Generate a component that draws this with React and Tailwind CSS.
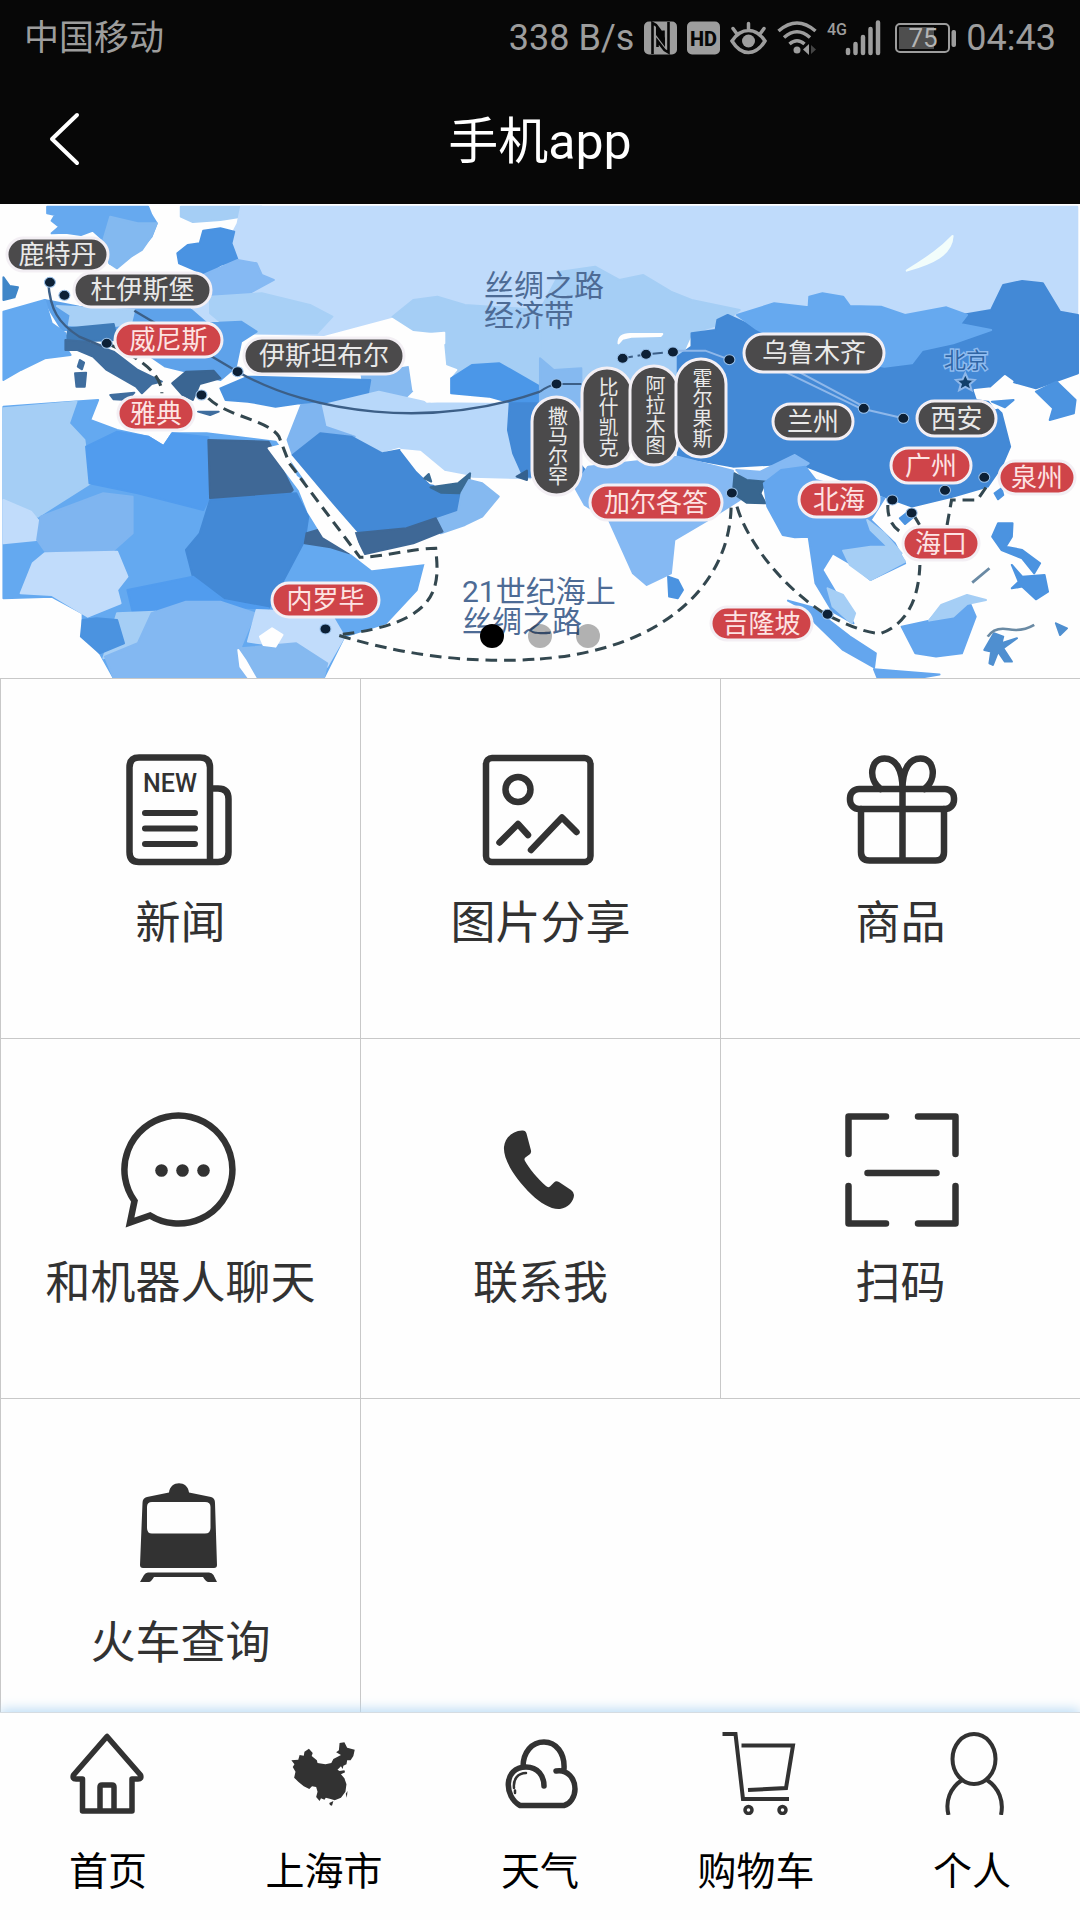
import React from "react";

const LAND_WEST = [
  ["#66a9ef", "M137 20H430L440 45 455 70 440 110 415 140 385 165 340 200 318 190 300 120 270 92 235 105 190 98 150 100 172 80 150 62 160 45 137 40Z"],
  ["#83b9f0", "M320 50L400 70 455 70 440 108 412 150 380 170 340 205 318 190 300 120Z"],
  ["#a5cef5", "M525 20H760L700 50 640 60 560 66 525 50Z"],
  ["#bfdbfb", "M700 20H1568V420L1330 470 1250 320 940 405 730 400 640 360 560 370 560 230 690 200 670 110 690 70Z"],
  ["#4a93e2", "M515 160L545 135 580 130 590 92 640 85 680 95 672 130 690 180 640 195 600 225 520 190Z"],
  ["#85b9f3", "M590 225L690 180 745 190 760 225 795 240 720 282 610 290Z"],
  ["#a8d0f6", "M610 290L760 280 900 315 965 350 920 400 730 400 640 365 610 340Z"],
  ["#5ea2ea", "M130 300L230 320 550 325 600 370 700 365 745 395 700 425 685 500 640 540 560 520 480 500 340 400 180 390 150 340Z"],
  ["#a8d0f6", "M165 318L390 330 380 372 280 385 200 375 205 345Z"],
  ["#3f7bb8", "M200 385L330 372 340 420 190 425Z"],
  ["#64a9f0", "M10 335L130 300 150 370 190 400 190 440 205 465 130 475 60 510 10 540Z"],
  ["#3f86c8", "M10 232L28 258 52 262 42 292 10 300Z"],
  ["#3f6d9e", "M190 420L250 425 330 455 400 510 470 545 440 552 412 580 395 560 310 510 270 470 225 450 190 450Z"],
  ["#3f6d9e", "M218 520L250 518 246 560 222 560ZM232 480L244 488 238 508 226 500ZM320 585L390 578 370 600 330 598ZM575 635H635L610 645Z"],
  ["#3a6592", "M500 550L540 515 620 512 640 535 580 552 560 600 530 585Z"],
  ["#a5cef5", "M1140 350L1200 300 1270 290 1350 315 1568 330V590H1440L1340 560 1300 510 1290 400 1200 390Z"],
  ["#85b9f0", "M1050 525L1190 500 1210 560 1170 600 1060 600Z"],
  ["#4b93e0", "M640 565L720 530 1075 540 1065 600 980 612 870 610 800 620 720 605 655 600Z"],
  ["#b8d8fa", "M900 625L1100 575 1250 610 1480 612 1510 800 1540 835 1370 830 1240 800 1160 740 1110 755 1000 700 930 680Z"],
  ["#7fb5f0", "M875 615L930 610 945 680 1030 710 930 700 850 765 835 720Z"],
  ["#fefefe", "M1170 440L1210 405 1290 398 1290 430 1240 440 1248 480 1325 510 1296 545 1310 600 1240 605 1200 570 1190 500Z"],
  ["#4b97e8", "M1310 535L1370 495 1450 490 1568 560V605L1490 610 1420 590 1310 580Z"],
  ["#4389d6", "M1480 610H1568V830H1520L1490 760 1475 690Z"],
  ["#35618f", "M1500 830L1530 812V840Z"],
  ["#4389d6", "M850 765L930 700 1020 710 1110 760 1160 750 1240 830 1270 875 1340 875 1330 940 1260 960 1180 985 1040 995 960 900Z"],
  ["#fefefe", "M1165 750L1220 755 1290 815 1355 828 1320 862 1250 850 1210 810Z"],
  ["#3a6b94", "M1250 862L1330 850 1365 820 1362 850 1335 880 1280 878ZM1232 835L1245 822 1252 845Z"],
  ["#85b9f0", "M1362 840L1400 850 1448 890 1400 950 1350 975 1280 1000 1260 960 1330 935 1340 880Z"],
  ["#3f6896", "M1030 1000L1180 985 1265 955 1285 995 1200 1030 1060 1062Z"],
  ["#64a9f0", "M10 620L210 605 285 600 262 660 340 690 430 710 475 738 500 700 600 700 800 725 1045 1080 1230 1090 1210 1170 1120 1270 1000 1310 940 1434H330L290 1360 240 1300 240 1240 150 1190 10 1195Z"],
  ["#a5cef5", "M10 625L222 605 200 670 245 720 262 850 110 950 10 900Z"],
  ["#519cee", "M250 740L340 695 430 710 475 738 500 700 605 712V900L590 930 400 880 260 850Z"],
  ["#3f6896", "M605 720L780 725 850 870 830 890 610 895Z"],
  ["#4389d6", "M610 900L860 880 895 950 885 1020 780 1225 650 1200 560 1130 540 1050 580 1000Z"],
  ["#c1dcfb", "M10 900L90 935 118 970 105 1020 10 1030Z"],
  ["#7fb5f0", "M118 950L300 880 385 890 385 1000 320 1060 130 1052 108 1020Z"],
  ["#c1dcfb", "M130 1060L340 1055 370 1130 340 1170 350 1210 255 1250 150 1185 60 1180 95 1090Z"],
  ["#519cee", "M370 1170L560 1130 650 1200 780 1225 560 1220 440 1240 385 1235Z"],
  ["#a5cef5", "M340 1240L450 1235 410 1340 300 1375Z"],
  ["#83b8f2", "M440 1240L540 1205 640 1205 740 1240 700 1340 735 1434H330L305 1370 400 1330Z"],
  ["#4b93e0", "M240 1260L280 1255 340 1260 360 1330 290 1360 235 1310Z"],
  ["#c1dcfb", "M745 1230L960 1240 1000 1310 950 1400 870 1345 720 1325Z"],
  ["#85b9f0", "M700 1345L860 1330 950 1390 940 1434H730Z"],
  ["#fefefe", "M755 1310L790 1285 820 1305 800 1340 765 1335ZM692 1350L712 1380 742 1434H722L698 1400Z"],
  ["#3f6896", "M890 1000L940 985 1015 1060 960 1042 885 1030Z"],
  ["#fefefe", "M780 745L820 735 860 830 940 890 960 940 1025 990 1050 1070 1240 1055 1300 1060 1230 1090 1080 1108 1020 1060 940 1010 895 935 870 870Z"],
];

const LAND_EAST = [
  ["#bfdbfb", "M0 20H1560V400H0Z"],
  ["#a5cef5", "M0 330L60 215 160 200 230 240 300 225 380 275 440 300 580 330 530 370 440 400 410 470 400 640H0Z"],
  ["#85b9f0", "M0 475L40 510 120 505V620H0Z"],
  ["#fefefe", "M228 430Q228 402 262 402H355L350 408 265 410 240 416Z"],
  ["#4389d6", "M440 400L510 390 515 360 545 345 620 380 900 480 1100 450 1220 380 1225 345 1310 330 1345 255 1400 243 1460 250 1510 335 1562 345V520L1440 565 1370 545 1290 570 1310 610 1340 640 1365 740 1340 800 1300 860 1200 890 1080 920 1000 890 900 850 750 790 560 800 400 770V470L440 440Z"],
  ["#66a9ef", "M572 345L680 310 780 322 782 290 820 280 880 290 900 318 990 320 1060 345 1180 322 1240 345 1220 372 1310 390 1200 430 1110 450 1080 490 1000 500 740 450 625 385Z"],
  ["#fefefe", "M1262 570L1310 565 1350 528 1372 545 1340 585 1380 605 1322 625 1305 600 1270 595Z"],
  ["#4b93e0", "M1312 605L1375 600 1350 622ZM1440 575L1500 545 1555 600 1550 640 1480 660 1490 625Z"],
  ["#4389d6", "M90 760L130 810 155 855 120 855Z"],
  ["#85b9f3", "M100 860L140 800 400 770 560 812 580 900 480 965 390 1020 380 1120 310 1155 270 1120 200 960 130 915Z"],
  ["#85b9f3", "M570 810L640 815 740 765 780 790 690 850 600 845Z"],
  ["#4b93e0", "M372 1130L400 1140 415 1170 400 1195 375 1190Z"],
  ["#38668f", "M565 820L600 840 655 845 640 880 655 910 600 908 560 880Z"],
  ["#64a6ee", "M650 850L700 810 770 800 800 840 1000 895 960 960 1030 1030 1060 1090 960 1140 900 1090 850 1060 820 1110 860 1180 910 1270 850 1235 800 1150 780 1010 740 1012 705 1005 660 920Z"],
  ["#a5cef5", "M880 1052L960 1040 1030 1040 1060 1085 960 1140 900 1095ZM835 1165L880 1185 915 1240 905 1270 850 1220ZM950 960L1000 1000 1050 1060 1030 1060 960 990Z"],
  ["#64a6ee", "M720 1202L790 1222 900 1310 975 1360 970 1402 880 1350 800 1270 770 1230ZM970 1408L1160 1424 1100 1434H980Z"],
  ["#64a6ee", "M1050 1280L1130 1262 1170 1215 1240 1190 1265 1250 1225 1360 1150 1370 1090 1360Z"],
  ["#a5cef5", "M1130 1262L1165 1215 1240 1185 1295 1200 1240 1212 1200 1250Z"],
  ["#4b93e0", "M1330 970L1372 970 1370 1010 1352 1040 1400 1050 1452 1090 1435 1120 1400 1075 1340 1050 1313 1010ZM1370 1095L1400 1130 1465 1125 1475 1175 1440 1198 1400 1160 1370 1165 1390 1145Z"],
  ["#4f8fd0", "M1290 1350L1318 1300 1345 1310 1340 1330 1385 1315 1345 1345 1370 1385 1350 1385 1330 1355 1315 1395 1305 1390 1310 1355ZM1498 1270L1530 1285 1510 1305Z"],
  ["#4b93e0", "M1045 955L1070 935 1085 950 1060 972ZM1320 880L1340 865 1345 885 1330 898Z"],
  ["#f2fdfb", "M1065 212C1120 175 1160 150 1198 108 1195 165 1140 190 1065 212Z"],
];

const DOTS_WEST = [[145, 247], [187, 286], [310, 430], [690, 515], [585, 585], [945, 1287]];
const DOTS_EAST = [[48, 552], [240, 475], [308, 463], [386, 456], [550, 479], [940, 625], [1055, 655], [1290, 832], [1176, 871], [1023, 900], [1079, 939], [557, 879], [835, 1243]];

// name, x, y, width, height, kind
const CITIES = [
  ["鹿特丹", 7, 34, 101, 33, "land"],
  ["杜伊斯堡", 74, 69, 137, 34, "land"],
  ["威尼斯", 115, 119, 107, 34, "sea"],
  ["伊斯坦布尔", 244, 134, 160, 36, "land"],
  ["雅典", 118, 193, 76, 33, "sea"],
  ["内罗毕", 272, 379, 107, 34, "sea"],
  ["乌鲁木齐", 744, 130, 140, 38, "land"],
  ["兰州", 773, 200, 80, 35, "land"],
  ["西安", 917, 197, 79, 35, "land"],
  ["广州", 891, 244, 80, 35, "sea"],
  ["泉州", 999, 257, 76, 33, "sea"],
  ["北海", 799, 278, 80, 35, "sea"],
  ["海口", 903, 323, 76, 33, "sea"],
  ["加尔各答", 590, 281, 132, 35, "sea"],
  ["吉隆坡", 711, 403, 101, 33, "sea"],
  ["撒马尔罕", 532, 193, 49, 98, "land"],
  ["比什凯克", 582, 164, 50, 99, "land"],
  ["阿拉木图", 630, 162, 48, 99, "land"],
  ["霍尔果斯", 676, 155, 50, 98, "land"],
];

function SilkRoadMap() {
  return (
    <svg viewBox="0 0 1080 474" className="block w-full" role="img" aria-label="丝绸之路地图">
      <rect width="1080" height="474" fill="#fefefe" />
      <g transform="matrix(.3444 0 0 .3333 0 -4)" strokeWidth="6" strokeLinejoin="round">
        {LAND_WEST.map(([fill, d]) => <path key={d} d={d} fill={fill} stroke={fill} />)}
      </g>
      <g transform="matrix(.3444 0 0 .3333 540 -4)" strokeWidth="6" strokeLinejoin="round">
        {LAND_EAST.map(([fill, d]) => <path key={d} d={d} fill={fill} stroke={fill} />)}
        <path d="M1255 1148L1305 1105M1300 1310Q1320 1280 1360 1288T1435 1275" fill="none" stroke="#6a8aa4" strokeWidth="8" />
      </g>
      <g transform="matrix(.3444 0 0 .3333 0 -4)" fill="none" stroke="#3c5f87" strokeWidth="7">
        <path d="M140 245C145 330 170 370 230 410L300 440M390 332L690 515C900 640 1250 690 1568 575" />
        <g stroke="#33474f" strokeWidth="9" strokeDasharray="34 20">
          <path d="M320 435C400 470 470 520 470 580M605 595C660 650 780 660 810 710L840 790 1045 1072C1120 1070 1200 1045 1265 1045 1275 1150 1290 1270 980 1305 1200 1375 1400 1390 1568 1377" />
        </g>
        <g fill="#0c2036" stroke="#9cc3ec" strokeWidth="3">
          {DOTS_WEST.map(([x, y]) => <ellipse key={x} cx={x} cy={y} rx="16" ry="15" />)}
        </g>
      </g>
      <g transform="matrix(.3444 0 0 .3333 540 -4)" fill="none" stroke="#8fb8ea" strokeWidth="6">
        <path d="M710 515L930 625 1055 655M750 515L940 620" />
        <path stroke="#3c5f87" d="M0 575Q25 556 48 552H120" />
        <path stroke="#3c5f87" strokeDasharray="30 14" d="M240 475L308 463 386 456" />
        <path d="M386 452H480L550 479" />
        <g stroke="#33474f" strokeWidth="9" strokeDasharray="34 20">
          <path d="M0 1377C350 1350 550 1160 555 920M572 920C600 1020 700 1160 830 1243 920 1290 960 1300 990 1300 1070 1270 1100 1190 1103 1095M1010 915C1008 960 1030 990 1055 1000M1085 945L1105 980M1182 975L1195 900 1270 900 1300 855" />
        </g>
        <g fill="#0c2036" stroke="#9cc3ec" strokeWidth="3">
          {DOTS_EAST.map(([x, y]) => <ellipse key={x} cx={x} cy={y} rx="16" ry="15" />)}
        </g>
        <path d="M1235 520L1243 538 1262 540 1248 553 1253 571 1235 561 1217 571 1222 553 1208 540 1227 538Z" fill="#12406b" />
      </g>
      <g fontSize="30" fill="#4d6b95" dominantBaseline="central">
        <text x="484" y="81">丝绸之路</text>
        <text x="484" y="111">经济带</text>
        <text x="462" y="387">21世纪海上</text>
        <text x="462" y="417">丝绸之路</text>
      </g>
      <text x="966" y="156" fontSize="22" fill="#2f65a5" stroke="#8fbcf0" strokeWidth="3" paintOrder="stroke" textAnchor="middle" dominantBaseline="central">北京</text>
      {CITIES.map(([name, x, y, w, h, kind]) => {
        const tall = h > w;
        return (
          <g key={name}>
            <rect x={x} y={y} width={w} height={h} rx={Math.min(w, h) / 2} fill={kind === "sea" ? "#cf4449" : "#4b4a4b"} stroke="#f3eff4" strokeWidth="3" />
            <text
              x={x + w / 2}
              y={y + h / 2}
              fontSize={tall ? 20 : 26}
              fill={kind === "sea" ? "#fde3e3" : "#e9e9e9"}
              textAnchor="middle"
              dominantBaseline="central"
              className={tall ? "[writing-mode:vertical-rl]" : ""}
            >
              {name}
            </text>
          </g>
        );
      })}
    </svg>
  );
}

function TileIcon({ children }) {
  return (
    <svg viewBox="0 0 120 120" className="size-[120px]" fill="none" stroke="#323232" strokeWidth="6.5" strokeLinecap="round" strokeLinejoin="round" aria-hidden="true">
      {children}
    </svg>
  );
}

const TILES = [
  { label: "新闻", icon: (
    <>
      <path d="M18 8.500H79Q89 8.500 89 18.500V113H18Q8.500 113 8.500 103V18.500Q8.500 8.500 18 8.500ZM89 39.500H97Q107.500 39.500 107.500 50V103Q107.500 113 97 113H87" strokeWidth="6.500" />
      <path d="M24 64H74M24 79.500H74M24 95H74" strokeWidth="6" />
      <text x="49" y="43" textAnchor="middle" fontSize="25" fontWeight="500" fill="#323232" stroke="none">NEW</text>
    </>
  ) },
  { label: "图片分享", icon: (
    <>
      <rect x="5" y="9" width="104.500" height="104" rx="6" />
      <circle cx="37" cy="40.500" r="12.500" />
      <path d="M18.500 93.500L37 75 47 86M50 101L81 68.500 95.500 83" />
    </>
  ) },
  { label: "商品", icon: (
    <>
      <rect x="9" y="40" width="104" height="20" rx="9" />
      <path d="M20 60V103Q20 111.500 28.500 111.500H94.500Q103 111.500 103 103V60M61.500 40V111" />
      <path d="M39.500 40C26.500 30 29.500 9.500 43.500 9.500 54.500 9.500 61.500 20 61.500 40M83.500 40C96.500 30 93.500 9.500 79.500 9.500 68.500 9.500 61.500 20 61.500 40" />
    </>
  ) },
  { label: "和机器人聊天", icon: (
    <>
      <path d="M13.500 92A54 54 0 1 1 29 106.500L9 113.500Z" strokeLinejoin="miter" strokeWidth="6.500" />
      <g fill="#323232" stroke="none"><circle cx="40.500" cy="61.500" r="6.300" /><circle cx="61.500" cy="61.500" r="6.300" /><circle cx="82.500" cy="61.500" r="6.300" /></g>
    </>
  ) },
  { label: "联系我", icon: (
    <path fill="#323232" stroke="none" d="M41 21.500C32 22 24 28 23 38 22 49 32 68 51 86 59 94 71 101 79 100 87 99 93 92 93 86Q93 83 90 81L78 73Q75 71.500 73 73.500L69 77.500Q67 79 65 77C56 69 48 59 44 52Q42.500 49.500 45 48L48.500 45.500Q50.500 44 50 41.500L45.500 24.500Q44.500 21 41 21.500Z" />
  ) },
  { label: "扫码", icon: (
    <path d="M45 7.500H7.500V45M77 7.500H114.500V45M7.500 77V114.500H45M114.500 77V114.500H77M26.500 64H95.500" />
  ) },
  { label: "火车查询", icon: (
    <g fill="#323232" stroke="none">
      <path fillRule="evenodd" d="M48 23.500C49 11 67 11 68 23.500L90 28Q94 29 94 34L96 96Q96 99 93 99H22Q19 99 19 96L21.500 34Q21.500 29 26 28ZM31 33Q26 33 26 38V59Q26 64.500 31 64.500H84Q89.500 64.500 89.500 59V38Q89.500 33 84 33Z" />
      <path d="M27 103.500H88Q91 103.500 92.500 106L96 113H87.500Q85 113 82 108H33Q30 113 28 113H19L23 106Q24.500 103.500 27 103.500Z" />
    </g>
  ) },
];

const TABS = [
  { label: "首页", icon: (
    <path strokeWidth="5.500" d="M41 5.500L7.500 44Q6 48 10 48H16.500V80H66V48H72Q76 48 74.500 44ZM34 80V56Q34 54 36 54H46Q48 54 48 56V80" strokeLinejoin="round" />
  ) },
  { label: "上海市", icon: (
    <path transform="matrix(.3444 0 0 .3333 -282 -30)" fill="#323232" stroke="none" d="M846 178L866 176 870 162 882 164 884 152 897 143 908 156 905 165 920 178 922 186 945 190 962 186 968 174 990 162 976 154 984 148 986 126 1000 124 1008 140 1030 146 1026 165 1018 178 1008 178 1006 190 997 194 995 204 990 196 980 206 986 210 1000 208 1002 214 990 220 1000 232 1006 250 1003 272 990 290 972 298 960 294 946 290 942 296 932 292 928 300 918 288 922 272 918 258 906 256 898 264 882 256 866 242 854 230 858 212 850 198 855 190ZM956 306L968 300 964 314 958 312ZM1004 278L1009 270 1007 290Z" />
  ) },
  { label: "天气", icon: (
    <>
      <path strokeWidth="5.500" d="M66 74.500H22C6 66 5 36 28 36 40 36 46 45 46 55M25 36C25 21 34 11 46 11 58 11 67 22 66 38M58 40C70 38 77 48 77 58 77 66 72 73 66 74.500" strokeLinecap="round" />
      <path strokeWidth="2.500" d="M16 57C15 48 20 42 28 42M17 59.500V62" strokeLinecap="round" />
    </>
  ) },
  { label: "购物车", icon: (
    <>
      <path strokeWidth="4" d="M8.500 3H21.500L29 68H75M27.500 14.500H79L72 57 34 59" />
      <g strokeWidth="3.500"><circle cx="34.500" cy="79" r="3.500" /><circle cx="68.500" cy="79" r="3.500" /></g>
    </>
  ) },
  { label: "个人", icon: (
    <g strokeWidth="4"><ellipse cx="44" cy="28" rx="21.500" ry="25" /><path d="M32 49C20 57 15 70 18.500 84M57 49C69 57 74 70 71 84" /></g>
  ) },
];

function StatusIcons() {
  return (
    <>
      <svg className="h-[34px] w-[33px]" viewBox="0 0 33 34" aria-hidden="true">
        <rect y=".5" width="33" height="33" rx="5" fill="#9d9d9d" />
        <path d="M8.500 33V2L12 4 19.500 14V9.500M24.500 1V31.500L20.500 29 13.500 20V26" fill="none" stroke="#070707" strokeWidth="2.600" />
        <path d="M12 5L21 17V26L12 14Z" fill="#070707" />
      </svg>
      <svg className="h-[34px] w-[33px]" viewBox="0 0 33 34" aria-label="HD">
        <rect y=".5" width="33" height="33" rx="5" fill="#9d9d9d" />
        <text x="16.500" y="24.500" textAnchor="middle" fontSize="20" fontWeight="800" fill="#070707">HD</text>
      </svg>
      <svg className="h-[34px] w-[37px]" viewBox="0 0 37 34" fill="none" stroke="#9d9d9d" strokeWidth="3.500" strokeLinecap="round" aria-hidden="true">
        <path d="M2 20Q9 9.500 18.500 9.500T35 20Q28 31.500 18.500 31.500T2 20ZM18.500 9V2.500M7 13L3 7.500M30 13L34 7.500" />
        <circle cx="18.500" cy="20" r="6.500" fill="#9d9d9d" stroke="none" />
      </svg>
      <svg className="h-[34px] w-[40px]" viewBox="0 0 40 34" fill="none" stroke="#9d9d9d" strokeWidth="3.500" aria-hidden="true">
        <path d="M1.500 10Q20-6 38.500 10M7 16.500Q20 5 33 16.500M12.500 23Q20 16.500 27.500 23" />
        <circle cx="20" cy="29" r="3.500" fill="#9d9d9d" stroke="none" />
        <path d="M26 28.500L32 23V34Z" fill="#9d9d9d" stroke="none" /><path d="M34 24L39 28.500 34 33Z" fill="#444" stroke="none" />
      </svg>
      <svg className="h-[36px] w-[54px]" viewBox="0 0 54 36" aria-label="4G">
        <text x="0" y="15" fontSize="16" fontWeight="500" fill="#9d9d9d">4G</text>
        <path d="M21 30V33M28.500 24V33M36 17V33M43.500 9V33M51 2.500V33" stroke="#9d9d9d" strokeWidth="4.500" strokeLinecap="round" />
      </svg>
      <svg className="ml-1 h-[30px] w-[61px]" viewBox="0 0 61 30" aria-label="75%">
        <rect x="1" y="1" width="53" height="28" rx="4" fill="none" stroke="#9d9d9d" strokeWidth="2" />
        <rect x="4" y="4" width="35" height="22" fill="#4e4e4e" />
        <rect x="56.500" y="7" width="4.500" height="17" rx="2" fill="#9d9d9d" />
        <text x="28" y="24" textAnchor="middle" fontSize="26" fill="#b4b4b4">75</text>
      </svg>
    </>
  );
}

export default function App() {
  return (
    <div className="flex h-screen flex-col overflow-hidden bg-[#fefefe] font-['Roboto','Noto_Sans_CJK_SC',sans-serif] text-[#323232]">
      <header className="shrink-0 bg-[#070707]">
        <div className="flex h-[76px] items-center justify-between px-6 text-[#9d9d9d]">
          <span className="text-[35px] leading-none">中国移动</span>
          <div className="flex items-center gap-2.5">
            <span className="text-[36px] leading-none">338 B/s</span>
            <StatusIcons />
            <span className="text-[36px] leading-none">04:43</span>
          </div>
        </div>
        <div className="grid h-32 grid-cols-[1fr_auto_1fr] items-center px-11 text-white">
          <button type="button" aria-label="返回" className="justify-self-start">
            <svg viewBox="0 0 40 56" className="h-14 w-10" fill="none" stroke="currentColor" strokeWidth="4" strokeLinecap="round" strokeLinejoin="round">
              <path d="M33 3L8 27 33 51" />
            </svg>
          </button>
          <h1 className="pt-1 text-[50px] leading-none font-normal">手机app</h1>
        </div>
      </header>

      <main className="min-h-0 flex-1 overflow-y-auto [scrollbar-width:none]">
        <section className="relative" aria-label="轮播图">
          <SilkRoadMap />
          <div className="absolute inset-x-0 bottom-[30px] flex justify-center gap-6">
            <button type="button" aria-label="第1张" className="size-6 rounded-full bg-black" />
            <button type="button" aria-label="第2张" className="size-6 rounded-full bg-black/30" />
            <button type="button" aria-label="第3张" className="size-6 rounded-full bg-black/30" />
          </div>
        </section>
        <nav className="grid grid-cols-3 border-t border-[#c8c8c8]" aria-label="功能">
          {TILES.map((tile, i) => (
            <a key={tile.label} href="#" className={`flex h-[360px] flex-col items-center border-l border-[#c8c8c8] pt-[70px] ${i < 6 ? "border-b" : ""}`}>
              <TileIcon>{tile.icon}</TileIcon>
              <span className="mt-6 text-[45px] leading-[62px]">{tile.label}</span>
            </a>
          ))}
          <div className="border-l border-[#c8c8c8]" />
        </nav>
      </main>

      <nav className="relative z-10 grid shrink-0 grid-cols-5 border-t border-[#d5dce2] bg-[#fefefe] pt-[18px] pb-[23px] shadow-[0_-2px_12px_#b5d8f4]" aria-label="主导航">
        {TABS.map((tab) => (
          <a key={tab.label} href="#" className="flex flex-col items-center text-black">
            <svg viewBox="0 0 84 84" className="size-[84px]" fill="none" stroke="#323232" aria-hidden="true">{tab.icon}</svg>
            <span className="mt-8 text-[39px] leading-[50px]">{tab.label}</span>
          </a>
        ))}
      </nav>
    </div>
  );
}
